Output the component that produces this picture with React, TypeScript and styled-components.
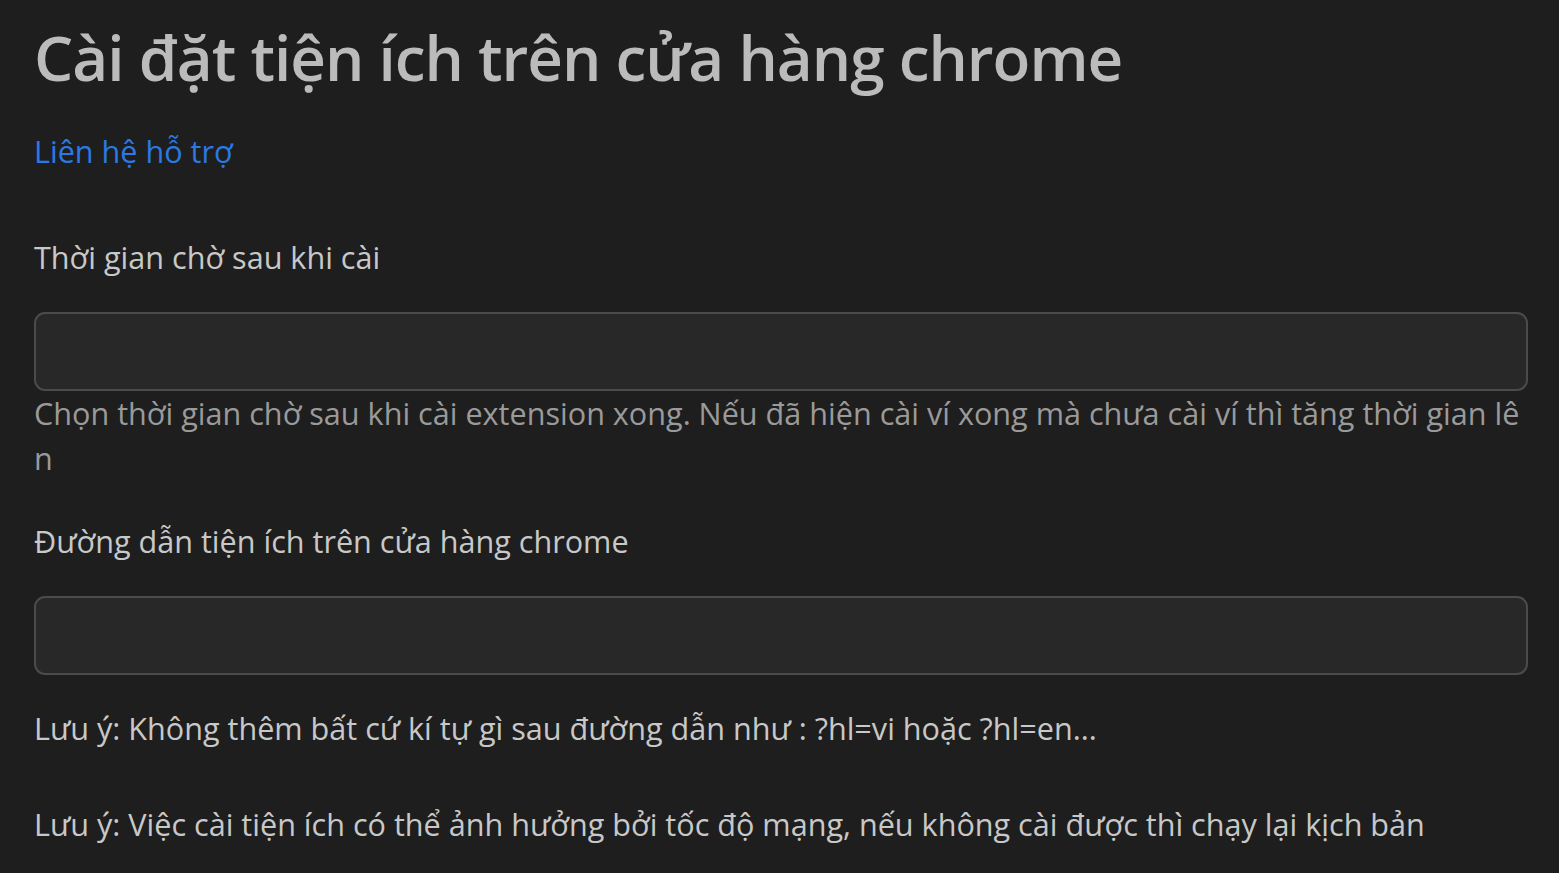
import React from "react";
import styled, { createGlobalStyle } from "styled-components";

const Global = createGlobalStyle`
  html, body {
    margin: 0;
    padding: 0;
    background: #1e1e1e;
  }
  body {
    font-family: "Open Sans", "Noto Sans", Arial, sans-serif;
    color: #c8c8c8;
  }
`;

const Page = styled.div`
  display: flex;
  flex-direction: column;
  padding: 15px 31px 0 34px;
  min-height: 873px;
  box-sizing: border-box;
`;

const Title = styled.h1`
  margin: 0;
  font-size: 62px;
  font-weight: 600;
  line-height: 84px;
  color: #bbbbbb;
  letter-spacing: -1px;
`;

const Link = styled.a`
  margin-top: 31px;
  font-size: 30.6px;
  line-height: 42px;
  color: #2b79e3;
  text-decoration: none;
  align-self: flex-start;
`;

const Field = styled.div<{ $top: number }>`
  display: flex;
  flex-direction: column;
  margin-top: ${(p) => p.$top}px;
`;

const Label = styled.label`
  font-size: 30.6px;
  line-height: 42px;
  color: #c8c8c8;
`;

const Input = styled.input`
  margin-top: 34px;
  height: 79px;
  box-sizing: border-box;
  border: 2px solid #4b4b4b;
  border-radius: 11px;
  background: #282828;
  color: #dddddd;
  font-size: 28px;
  padding: 0 20px;
  outline: none;
  font-family: inherit;
`;

const Help = styled.div`
  font-size: 30.6px;
  line-height: 45px;
  color: #9a9a9a;
  white-space: nowrap;
`;

const Note = styled.p<{ $top: number }>`
  margin: ${(p) => p.$top}px 0 0;
  font-size: 30.6px;
  line-height: 42px;
  color: #c8c8c8;
`;

export default function App() {
  return (
    <>
      <Global />
      <Page>
        <Title>Cài đặt tiện ích trên cửa hàng chrome</Title>
        <Link href="#">Liên hệ hỗ trợ</Link>
        <Field $top={64}>
          <Label>Thời gian chờ sau khi cài</Label>
          <Input type="text" />
          <Help>
            Chọn thời gian chờ sau khi cài extension xong. Nếu đã hiện cài ví xong mà chưa cài ví thì tăng thời gian lê
            <br />n
          </Help>
        </Field>
        <Field $top={39}>
          <Label>Đường dẫn tiện ích trên cửa hàng chrome</Label>
          <Input type="text" />
        </Field>
        <Note $top={32}>Lưu ý: Không thêm bất cứ kí tự gì sau đường dẫn như : ?hl=vi hoặc ?hl=en...</Note>
        <Note $top={54}>Lưu ý: Việc cài tiện ích có thể ảnh hưởng bởi tốc độ mạng, nếu không cài được thì chạy lại kịch bản</Note>
      </Page>
    </>
  );
}
